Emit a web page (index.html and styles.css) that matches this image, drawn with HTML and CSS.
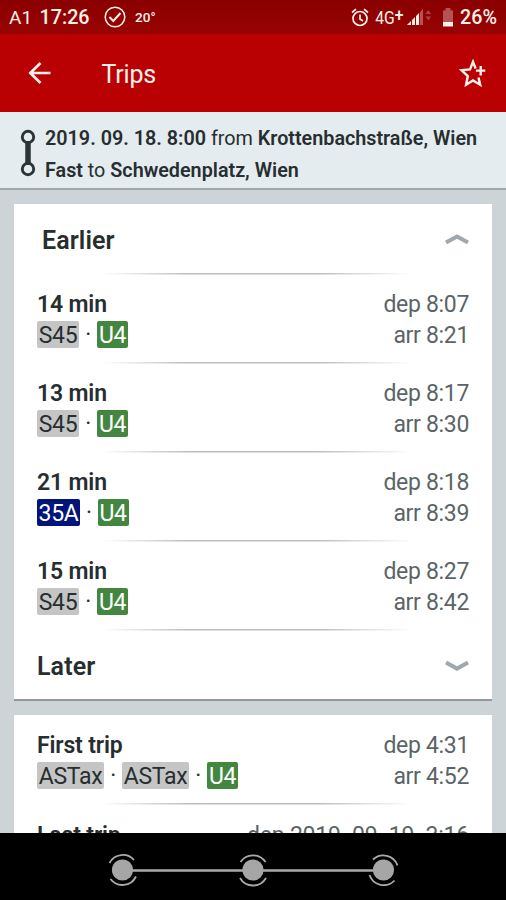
FILE: index.html
```html
<!DOCTYPE html>
<html lang="en">
<head>
<meta charset="utf-8">
<title>Trips</title>
<link rel="stylesheet" href="styles.css">
</head>
<body>
<div class="screen">
  <div class="status">
    <span class="carrier">A1</span>
    <span class="clock">17:26</span>
    <svg class="check" width="22" height="22" viewBox="0 0 22 22" fill="none" stroke="currentColor"><circle cx="11" cy="11" r="9.8" stroke-width="1.5"/><path d="M5.5 11l3.8 4 7.2-8" stroke-width="2"/></svg>
    <span class="temp">20°</span>
    <svg class="alarm" width="18" height="19" viewBox="0 0 18 19" fill="none" stroke="currentColor" stroke-width="1.7"><circle cx="9" cy="10.5" r="7"/><path d="M9 6.5v4.5l3 2M1 4.5L5 1.2M17 4.5L13 1.2"/></svg>
    <span class="network">4G<span class="plus">+</span></span>
    <svg class="signal" width="25" height="18" viewBox="0 0 25 18"><path d="M0 17l4-4v4zM5 17v-5l3-3v8zM9 17V8l3-3v12z" fill="currentColor"/><path d="M12.8 17V4.500L16 1v16z" fill="#bd5150"/><path d="M18.500 6l2.800-4 2.800 4zM18.500 8.500h5.600l-2.800 4z" fill="#a94442"/></svg>
    <svg class="battery" width="10" height="19" viewBox="0 0 10 19"><path d="M0 2.500h2.500V0h5v2.500H10V14H0z" fill="#b55352"/><path d="M0 14h10v4.500H0z" fill="currentColor"/></svg>
    <span class="percent">26%</span>
  </div>
  <header class="appbar">
    <svg class="back" width="24" height="24" viewBox="0 0 24 24" fill="none" stroke="currentColor" stroke-width="2.700"><path d="M22.500 12H2.500M12.500 2L2.300 12l10.200 10"/></svg>
    <h1>Trips</h1>
    <svg class="star" width="28" height="28" viewBox="0 0 28 28" fill="none" stroke="currentColor" stroke-width="2.400"><path d="M16.600 9.500L14 2.800 11 10.400 2.600 11.300l6.200 5.800-1.700 8.600 6.900-4.300 7.200 4.300-1.700-7.200M21.700 7v9.400M16.900 11.600h9.400"/></svg>
  </header>
  <section class="query">
    <svg class="route" width="16" height="48" viewBox="0 0 16 48" fill="none" stroke="currentColor"><path d="M8 12v24" stroke-width="5.500"/><circle cx="8" cy="8" r="5.700" stroke-width="2.900"/><circle cx="8" cy="40" r="5.700" stroke-width="2.900"/></svg>
    <div class="lines">
      <p class="from"><b>2019. 09. 18. 8:00</b> from <b>Krottenbachstraße, Wien</b></p>
      <p class="to"><b>Fast</b> to <b>Schwedenplatz, Wien</b></p>
    </div>
  </section>
  <main>
    <section class="card trips">
      <div class="toggle earlier"><h2>Earlier</h2><svg width="24" height="12" viewBox="0 0 24 12" fill="none" stroke="currentColor" stroke-width="4"><path d="M1 8.600L12 2.500l11 6.100"/></svg></div>
      <div class="trip"><div><h3>14 min</h3><p class="legs"><span class="line">S45</span><i>·</i><span class="line metro">U4</span></p></div><div class="times"><p>dep 8:07</p><p>arr 8:21</p></div></div>
      <div class="trip"><div><h3>13 min</h3><p class="legs"><span class="line">S45</span><i>·</i><span class="line metro">U4</span></p></div><div class="times"><p>dep 8:17</p><p>arr 8:30</p></div></div>
      <div class="trip"><div><h3>21 min</h3><p class="legs"><span class="line bus">35A</span><i>·</i><span class="line metro">U4</span></p></div><div class="times"><p>dep 8:18</p><p>arr 8:39</p></div></div>
      <div class="trip"><div><h3>15 min</h3><p class="legs"><span class="line">S45</span><i>·</i><span class="line metro">U4</span></p></div><div class="times"><p>dep 8:27</p><p>arr 8:42</p></div></div>
      <div class="toggle later"><h2>Later</h2><svg width="24" height="12" viewBox="0 0 24 12" fill="none" stroke="currentColor" stroke-width="4"><path d="M1 2.500l11 6.100 11-6.100"/></svg></div>
    </section>
    <section class="card limits">
      <div class="trip first"><div><h3>First trip</h3><p class="legs"><span class="line taxi">ASTax</span><i>·</i><span class="line taxi">ASTax</span><i>·</i><span class="line metro">U4</span></p></div><div class="times"><p>dep 4:31</p><p>arr 4:52</p></div></div>
      <div class="trip last"><div><h3>Last trip</h3></div><div class="times"><p>dep 2019. 09. 19. 3:16</p></div></div>
    </section>
  </main>
  <nav class="navbar">
    <svg width="290" height="34" viewBox="0 0 290 34" fill="none" stroke="#aaa" stroke-width="1.800">
      <path d="M14.500 17.500h261" stroke-width="2.500"/>
      <g fill="#a6a6a6" stroke="none"><circle cx="14.500" cy="17" r="10.600"/><circle cx="145" cy="17" r="10.600"/><circle cx="275.500" cy="17" r="10.600"/></g>
      <path d="M1.500 10a15 15 0 0 1 24.500-3M2.500 26a15 15 0 0 0 25.500-2.500"/>
      <path d="M132.500 9a15 15 0 0 1 25 0M132 25a15 15 0 0 0 26 0"/>
      <path d="M265 6.500a15 15 0 0 1 24.500 6M261.500 22a15 15 0 0 0 25 5.500"/>
    </svg>
  </nav>
</div>
</body>
</html>
```
FILE: styles.css
```css
* { box-sizing: border-box; margin: 0; padding: 0; }
body { font-family: Roboto, "Liberation Sans", sans-serif; color: #272e30; }
.screen { width: 506px; height: 900px; display: flex; flex-direction: column; overflow: hidden; background: #cdd4d8; }
svg { display: block; flex: none; }

.status { height: 34px; flex: none; display: flex; align-items: center; padding: 0 9px; background: linear-gradient(#8a0000, #980303); color: #fff0e9; font-size: 19.700px; white-space: nowrap; }
.carrier { font-size: 19px; }
.clock { font-weight: 500; margin-left: 7.500px; }
.check { margin-left: 14px; }
.temp { font-weight: 500; font-size: 13.500px; margin-left: 9.500px; }
.alarm { margin-left: auto; }
.network { font-size: 18px; width: 32px; margin-left: 2px; transform: scaleX(.87); transform-origin: right; }
.plus { display: inline-block; font-weight: 500; transform: translateY(-3px); }
.signal { margin-left: 4px; }
.battery { margin-left: 11px; }
.percent { font-weight: 500; margin-left: 7px; }

.appbar { height: 78px; flex: none; display: flex; align-items: center; padding: 0 19px 0 28px; background: #b90003; color: #fff0ec; }
.appbar h1 { font-size: 25px; letter-spacing: -.2px; font-weight: 400; margin-left: 49.500px; margin-top: 2px; }
.star { margin-left: auto; }

.query { height: 78px; flex: none; display: flex; padding: 17px 0 0 20px; background: #e4ecef; border-bottom: 2px solid #a0a8aa; }
.lines { margin-left: 9px; font-size: 19.750px; line-height: 32px; margin-top: -6.500px; white-space: nowrap; }
.lines b { font-weight: 600; }
.route { color: #2b3436; }

main { flex: 1; min-height: 0; overflow: hidden; padding: 14px 14px 0; display: flex; flex-direction: column; gap: 14px; }
.card { flex: none; background: #fff; border-bottom: 2px solid #92999d; padding: 0 23px; }
.toggle { display: flex; justify-content: space-between; align-items: center; color: #9fa9ad; }
.toggle h2 { font-size: 25px; letter-spacing: .1px; font-weight: 600; color: #272e30; }
.toggle.earlier { height: 69px; padding: 3px 0 0 5px; }
.toggle.later { height: 70px; padding-top: 4px; }
.trip { height: 89px; display: flex; justify-content: space-between; padding-top: 17px; line-height: 30px; font-size: 23px; letter-spacing: -.32px; white-space: nowrap; }
.trip, .toggle.later { background: linear-gradient(90deg, transparent 15%, #bdbdbd 35%, #bdbdbd 65%, transparent 87%) top / 100% 1.500px no-repeat; }
.trip h3 { font-size: 23px; letter-spacing: -.15px; font-weight: 600; }
.times { color: #5b6466; text-align: right; }
.times p + p { margin-top: 1px; }
.legs { display: flex; align-items: center; margin-top: -1px; }
.legs i { font-style: normal; width: 18px; text-align: center; line-height: 32px; margin-bottom: -2px; }
.line { width: 42px; height: 27px; line-height: 29px; text-align: center; border-radius: 2px; background: #c5c5c5; }
.metro { width: 31px; background: #43863f; color: #fff; }
.bus { background: #00147a; color: #fff; width: 43px; }
.bus + i { width: 17.500px; }
.taxi { width: 67px; }
.trip.first { background: none; height: 88px; padding-top: 16px; }
.trip.last { padding-top: 18px; letter-spacing: -.22px; }

.navbar { height: 67px; flex: none; background: #000; display: flex; justify-content: center; padding-top: 20px; }
```
